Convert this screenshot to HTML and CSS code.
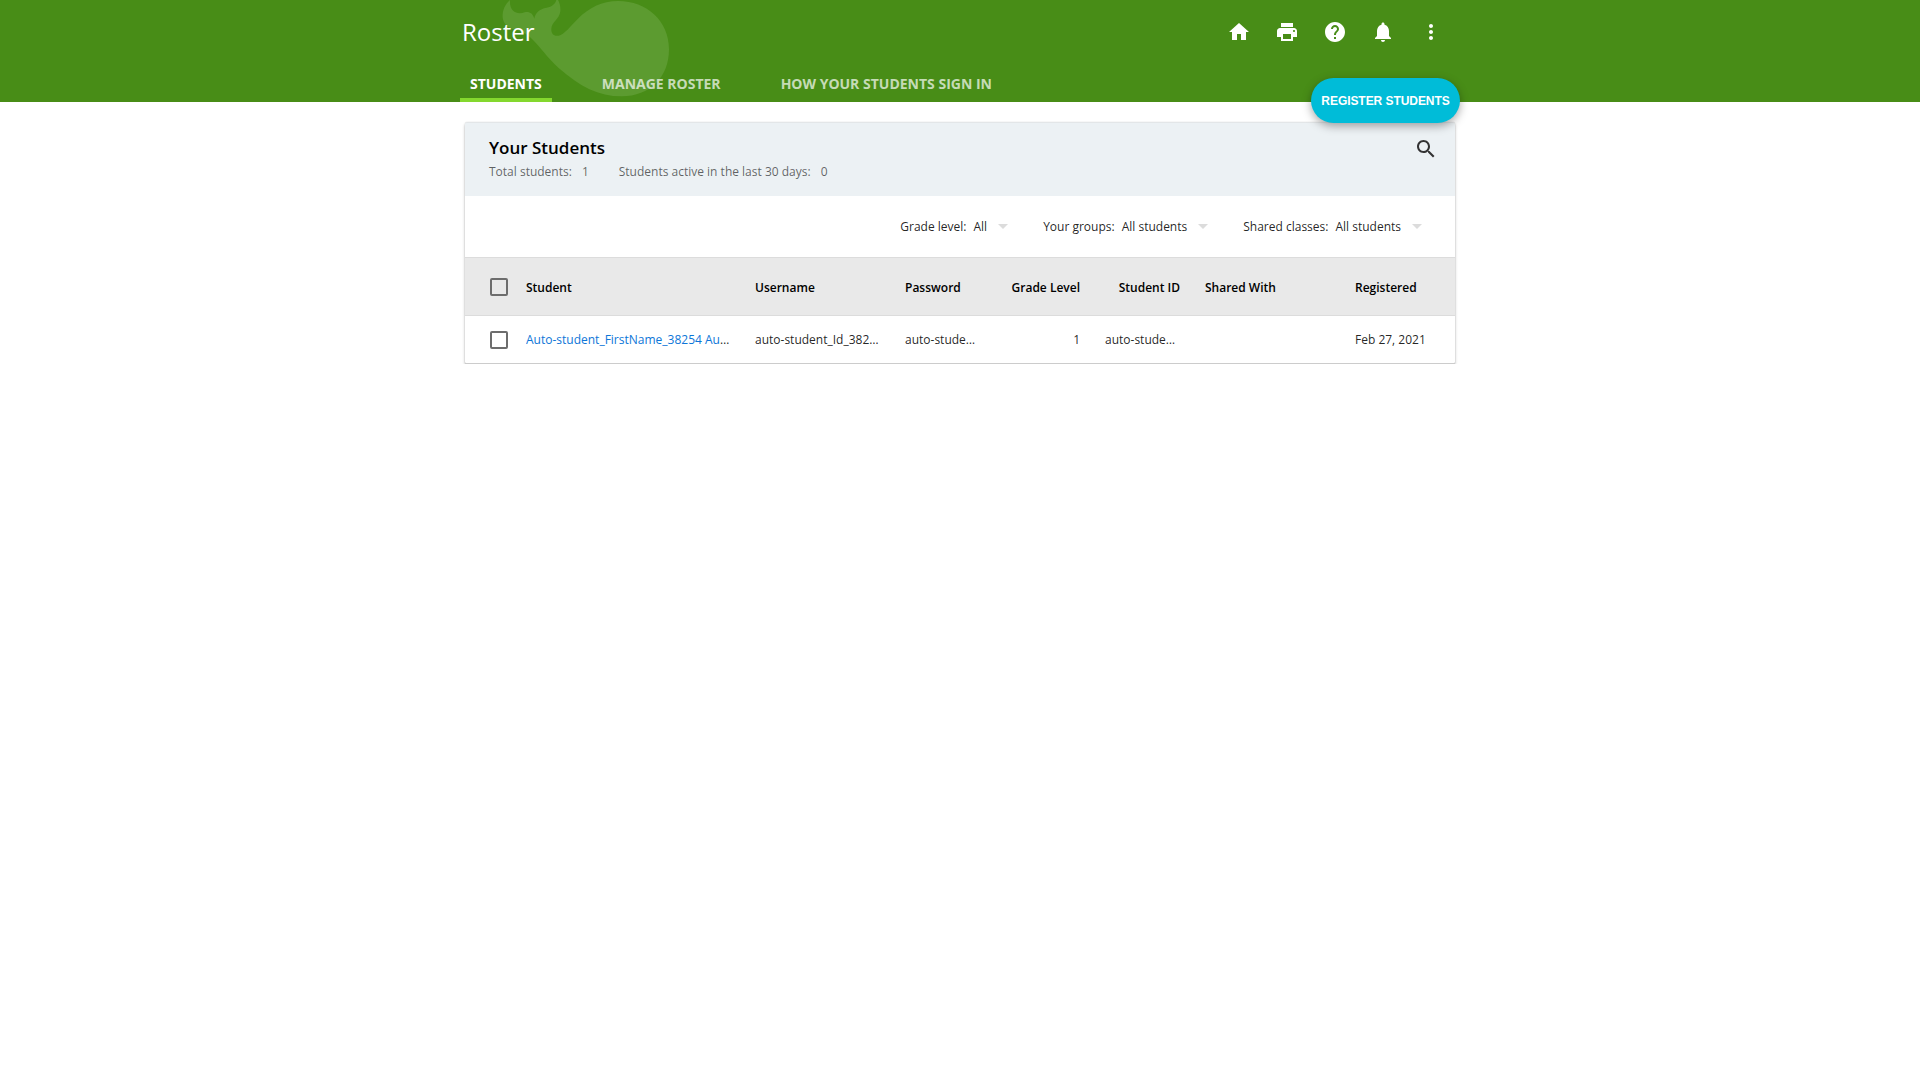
FILE: index.html
```html
<!DOCTYPE html>
<html lang="en">
<head>
<meta charset="utf-8">
<title>Roster</title>
<link rel="stylesheet" href="styles.css">
</head>
<body>
<header class="top">
  <svg class="whale" viewBox="0 0 900 306" aria-hidden="true"><path d="M180 0C164 14 157 32 158 52C160 70 170 82 192 88C214 94 230 101 246 117C270 140 291 172 326 204C390 260 445 289 515 289C600 289 657 232 657 148C657 62 590 3 505 3C455 3 416 24 384 56C362 78 342 104 326 107C310 110 303 100 304 86C305 66 328 58 331 34C332 20 329 9 324 0H319C315 13 306 20 290 23C268 27 256 38 253 56C248 40 238 34 224 37C203 45 177 36 180 0Z"/></svg>
  <div class="wrap">
    <div class="bar">
      <h1 class="title">Roster</h1>
      <div class="actions">
        <svg class="icon" viewBox="0 0 24 24"><path d="M10 20v-6h4v6h5v-8h3L12 3 2 12h3v8z"/></svg>
        <svg class="icon" viewBox="0 0 24 24"><path d="M19 8H5c-1.66 0-3 1.34-3 3v6h4v4h12v-4h4v-6c0-1.66-1.34-3-3-3zm-3 11H8v-5h8v5zm3-7c-.55 0-1-.45-1-1s.45-1 1-1 1 .45 1 1-.45 1-1 1zm-1-9H6v4h12V3z"/></svg>
        <svg class="icon" viewBox="0 0 24 24"><path d="M12 2C6.48 2 2 6.48 2 12s4.48 10 10 10 10-4.480 10-10S17.520 2 12 2zm1 17h-2v-2h2v2zm2.070-7.750l-.9.920C13.450 12.900 13 13.500 13 15h-2v-.5c0-1.100.45-2.100 1.170-2.830l1.240-1.260c.37-.36.59-.86.59-1.410 0-1.100-.9-2-2-2s-2 .9-2 2H8c0-2.210 1.790-4 4-4s4 1.790 4 4c0 .88-.36 1.680-.93 2.250z"/></svg>
        <svg class="icon" viewBox="0 0 24 24"><path d="M12 22c1.100 0 2-.9 2-2h-4c0 1.100.89 2 2 2zm6-6v-5c0-3.070-1.640-5.640-4.500-6.320V4c0-.83-.67-1.500-1.500-1.500s-1.500.67-1.500 1.500v.68C7.630 5.360 6 7.920 6 11v5l-2 2v1h16v-1l-2-2z"/></svg>
        <svg class="icon" viewBox="0 0 24 24"><path d="M12 8c1.100 0 2-.9 2-2s-.9-2-2-2-2 .9-2 2 .9 2 2 2zm0 2c-1.100 0-2 .9-2 2s.9 2 2 2 2-.9 2-2-.9-2-2-2zm0 6c-1.100 0-2 .9-2 2s.9 2 2 2 2-.9 2-2-.9-2-2-2z"/></svg>
      </div>
    </div>
    <nav class="tabs">
      <a class="tab active">STUDENTS</a>
      <a class="tab">MANAGE ROSTER</a>
      <a class="tab">HOW YOUR STUDENTS SIGN IN</a>
    </nav>
    <button class="register">REGISTER STUDENTS</button>
  </div>
</header>
<main class="card">
  <section class="head">
    <div>
      <h2 class="heading">Your Students</h2>
      <div class="stats">
        <span class="stat">Total students:<span class="num">1</span></span>
        <span class="stat">Students active in the last 30 days:<span class="num">0</span></span>
      </div>
    </div>
    <svg class="search" viewBox="0 0 24 24"><path d="M15.500 14h-.79l-.28-.27C15.410 12.590 16 11.110 16 9.500 16 5.910 13.090 3 9.500 3S3 5.910 3 9.500 5.910 16 9.500 16c1.610 0 3.090-.59 4.230-1.570l.27.28v.79l5 4.990L20.490 19l-4.990-5zm-6 0C7.010 14 5 11.990 5 9.500S7.010 5 9.500 5 14 7.010 14 9.500 11.990 14 9.500 14z"/></svg>
  </section>
  <section class="filters">
    <div class="filter"><span>Grade level:</span><span class="value">All</span><i class="caret"></i></div>
    <div class="filter"><span>Your groups:</span><span class="value">All students</span><i class="caret"></i></div>
    <div class="filter"><span>Shared classes:</span><span class="value">All students</span><i class="caret"></i></div>
  </section>
  <div class="row labels">
    <span class="check"></span>
    <span class="cell">Student</span><span class="cell">Username</span><span class="cell">Password</span><span class="cell right">Grade Level</span><span class="cell right">Student ID</span><span class="cell">Shared With</span><span class="cell">Registered</span>
  </div>
  <div class="row">
    <span class="check"></span>
    <span class="cell"><a class="link">Auto-student_FirstName_38254 Auto-student</a></span><span class="cell">auto-student_Id_38254</span><span class="cell">auto-student_38254</span><span class="cell right">1</span><span class="cell right">auto-student_38254</span><span class="cell"></span><span class="cell">Feb 27, 2021</span>
  </div>
</main>
</body>
</html>
```
FILE: styles.css
```css
* { box-sizing: border-box; }
body { margin: 0; background: #fff; color: rgba(0,0,0,.87); font: 12px/16px "Open Sans", sans-serif; }
.top { position: relative; height: 102px; background: #488d17; }
.whale { position: absolute; left: 450px; top: 0; width: 300px; height: 102px; fill: #5c9b30; }
.wrap { position: relative; width: 1000px; height: 102px; margin: 0 auto; display: flex; flex-direction: column; justify-content: space-between; }
.bar { height: 64px; padding: 0 17px 0 2px; display: flex; align-items: center; justify-content: space-between; }
.title { margin: 0; color: #fff; font-size: 24px; line-height: 32px; font-weight: 400; }
.actions { display: flex; gap: 24px; }
.icon { display: block; width: 24px; height: 24px; fill: #fff; }
.tabs { display: flex; gap: 40px; height: 36px; }
.tab { height: 36px; padding: 8px 10px 0; color: rgba(255,255,255,.7); font-size: 14px; line-height: 20px; font-weight: 700; }
.tab.active { color: #fff; border-bottom: 4px solid #84d82e; }
.register { position: absolute; left: 851px; top: 78px; z-index: 1; width: 149px; height: 45px; padding: 0; border: 0; border-radius: 23px; background: #00bcd8; color: #fff; font: 700 12px/16px "Liberation Sans", sans-serif; letter-spacing: -.06px; box-shadow: 0 3px 10px rgba(0,0,0,.35); }
.card { width: 990px; margin: 20px auto 0; border-radius: 2px; background: #fff; box-shadow: 0 0 1px rgba(0,0,0,.2), 0 1px 0 rgba(0,0,0,.22), 0 2px 3px rgba(0,0,0,.3); }
.head { height: 74px; padding: 14px 17px 0 24px; display: flex; justify-content: space-between; background: #ecf1f4; border-top: 1px solid #e3e6e8; border-radius: 2px 2px 0 0; }
.heading { margin: 0; color: #000; font-size: 17px; line-height: 22px; font-weight: 600; }
.stats { display: flex; gap: 30px; margin-top: 5px; color: rgba(0,0,0,.6); line-height: 16px; }
.num { margin-left: 10px; }
.search { width: 24px; height: 24px; fill: #333; }
.filters { height: 61px; padding: 0 33px 0 0; display: flex; align-items: center; justify-content: flex-end; gap: 35px; }
.filter { display: flex; align-items: center; }
.value { margin-left: 7px; }
.caret { width: 0; height: 0; margin-left: 11px; border: 5px solid transparent; border-top-color: #dcdcdc; border-bottom: 0; }
.row { display: grid; grid-template-columns: 36px 204px 125px 75px 75px 75px 125px 75px; column-gap: 25px; align-items: center; height: 48px; border-bottom: 1px solid #ccc; }
.row.labels { height: 59px; background: #e9e9e9; border-top: 1px solid #dcdcdc; border-bottom-color: #dcdcdc; color: #000; font-weight: 600; }
.labels .cell { padding-top: 3px; }
.check { width: 18px; height: 18px; margin: 1px 0 0 25px; border: 2px solid #6d6d6d; border-radius: 2px; }
.cell { overflow: hidden; white-space: nowrap; text-overflow: ellipsis; }
.right { text-align: right; }
.link { color: #0d76d8; }
```
